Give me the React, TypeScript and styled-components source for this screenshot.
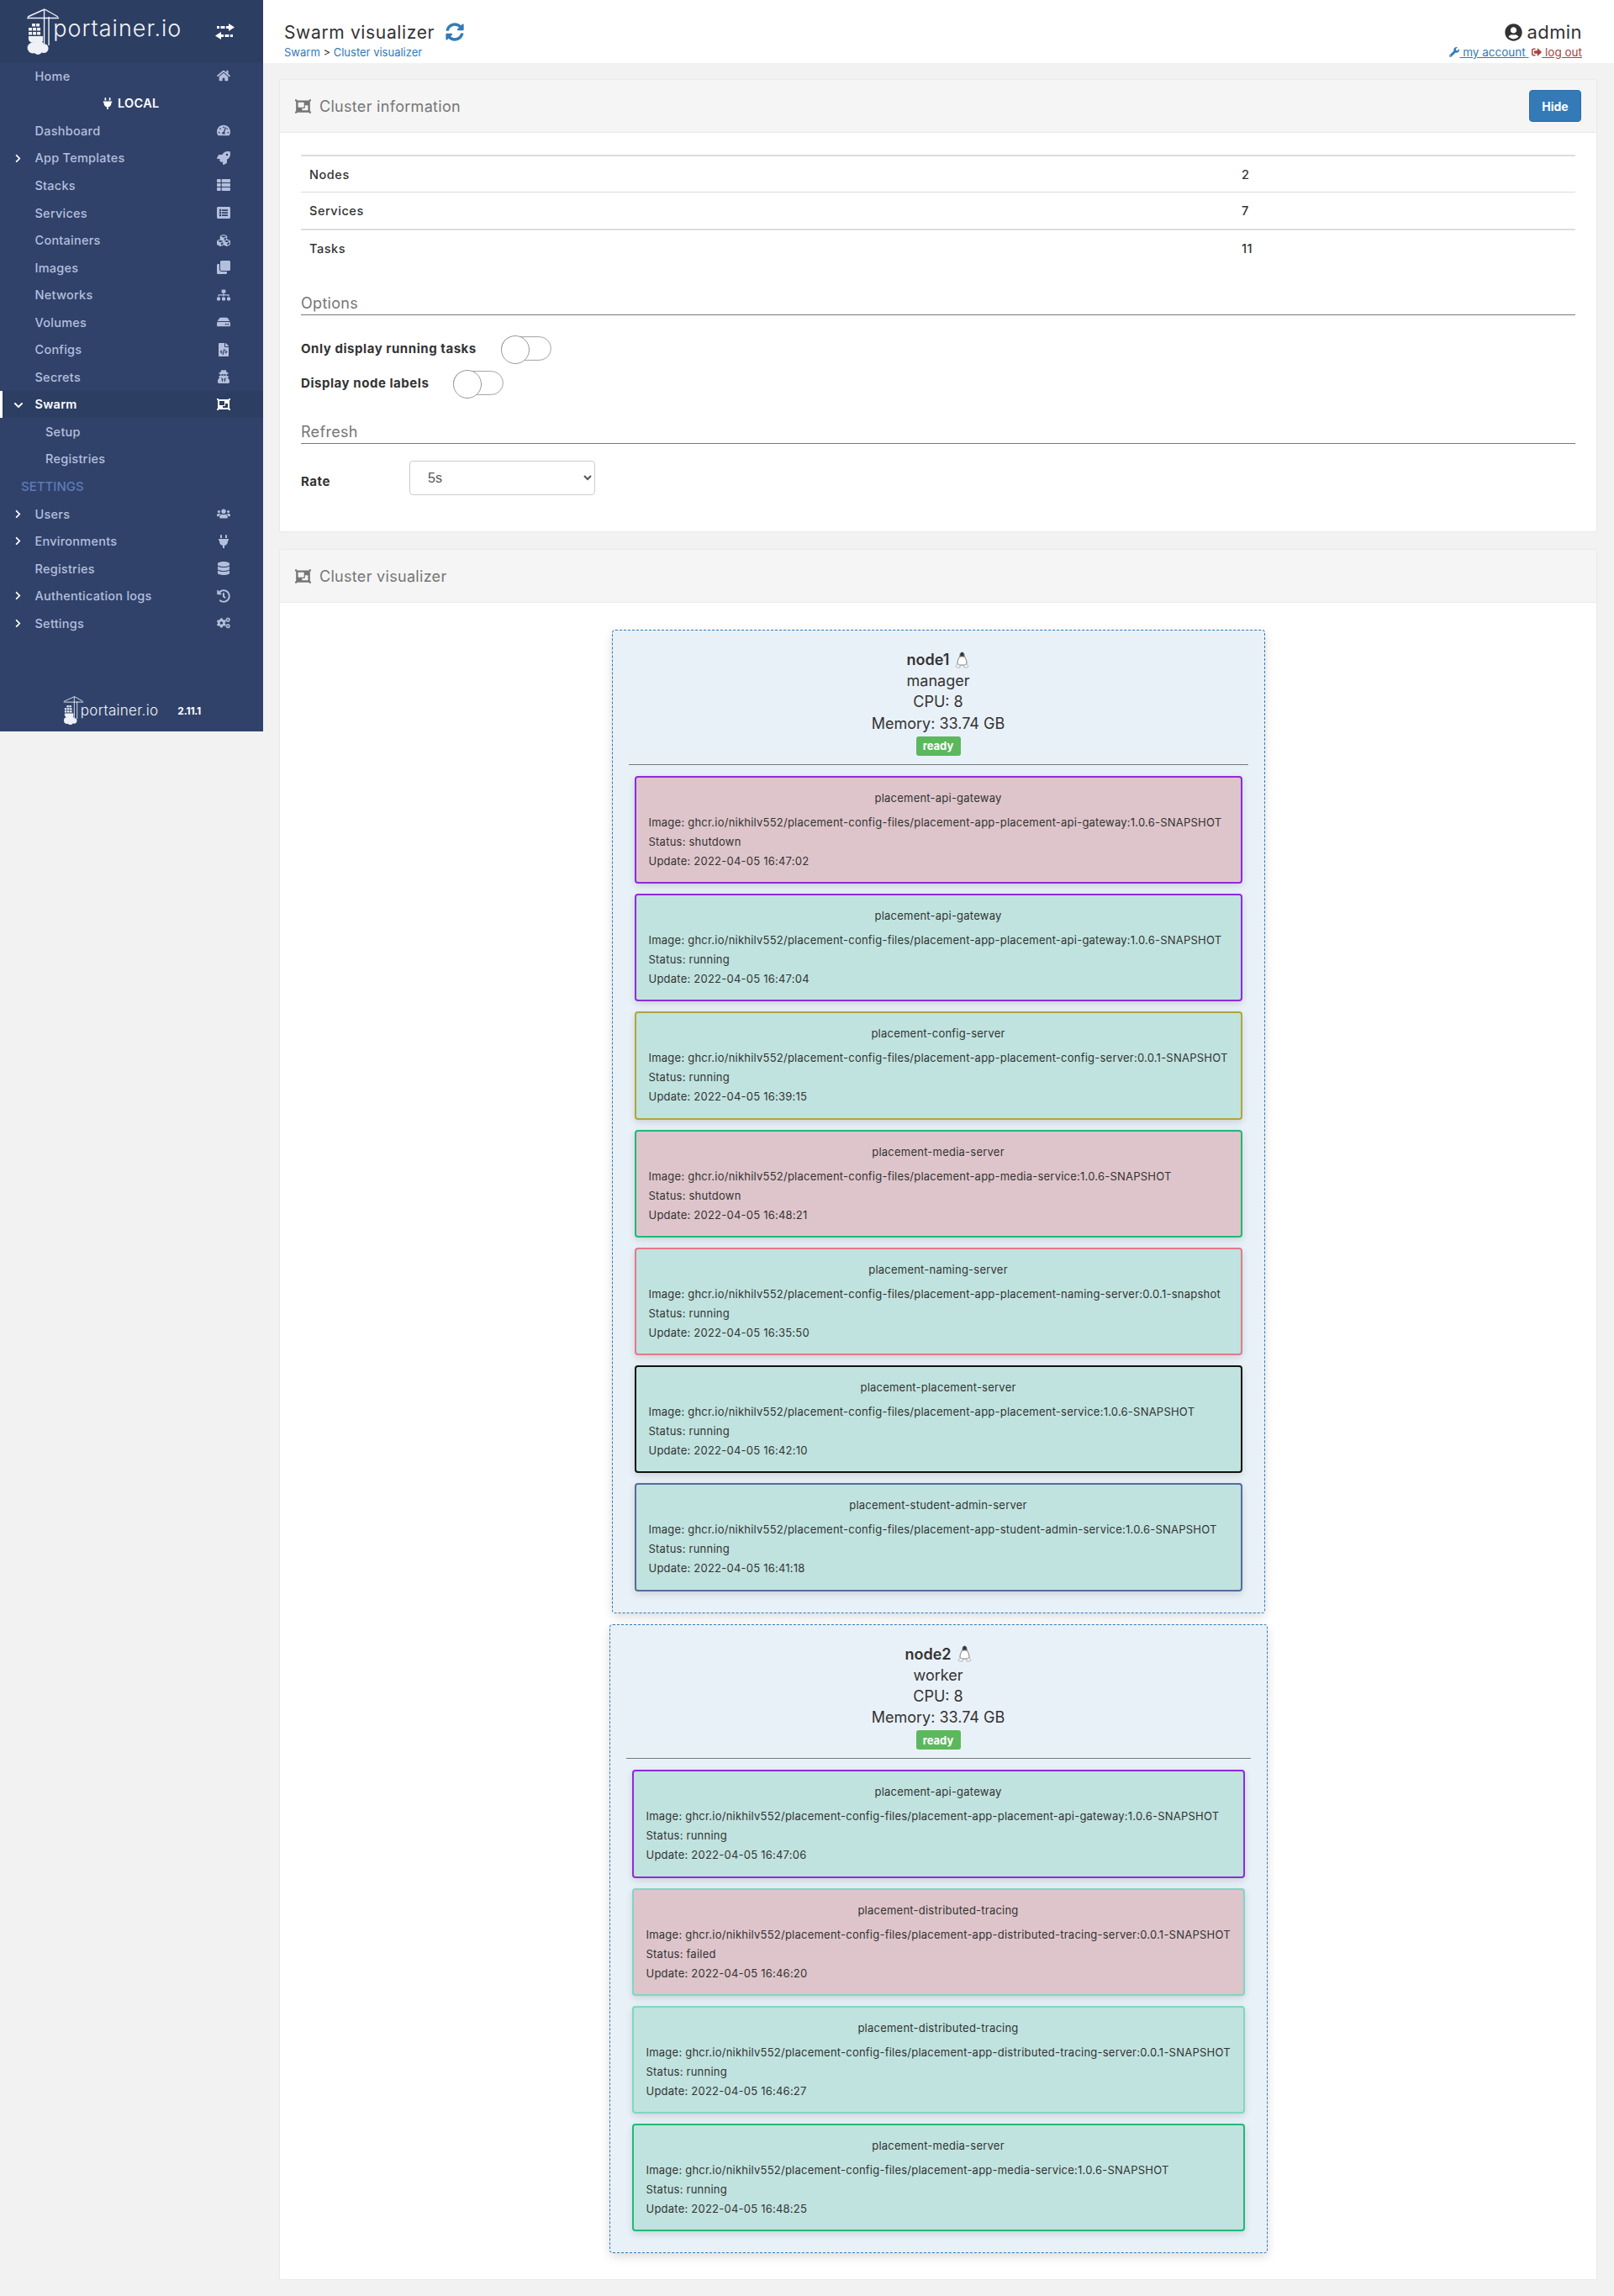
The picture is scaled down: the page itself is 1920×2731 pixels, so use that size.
import React from 'react';
import styled, { createGlobalStyle } from 'styled-components';
import {
  FaHome,
  FaTachometerAlt,
  FaRocket,
  FaThList,
  FaListAlt,
  FaCubes,
  FaClone,
  FaSitemap,
  FaHdd,
  FaFileCode,
  FaUserSecret,
  FaObjectGroup,
  FaUsers,
  FaPlug,
  FaDatabase,
  FaHistory,
  FaCogs,
  FaSyncAlt,
  FaUserCircle,
  FaWrench,
  FaSignOutAlt,
  FaChevronRight,
  FaChevronDown,
} from 'react-icons/fa';

const GlobalStyle = createGlobalStyle`
  html, body {
    margin: 0;
    padding: 0;
    background: #f2f2f2;
    color: #333;
    font-family: Inter, "Open Sans", sans-serif;
  }
  * {
    box-sizing: border-box;
  }
`;

const Page = styled.div`
  display: flex;
  width: 1920px;
  height: 2731px;
  overflow: hidden;
`;

/* sidebar */

const Sidebar = styled.aside`
  width: 313px;
  height: 870px;
  flex: none;
  background: #30426a;
  display: flex;
  flex-direction: column;
`;

const Brand = styled.div`
  height: 75px;
  flex: none;
  margin-bottom: -1px;
  background: #2d3e63;
  display: flex;
  align-items: center;
  padding-left: 31px;
  color: #fff;
`;

const BrandText = styled.span<{ $small?: boolean }>`
  font-weight: 300;
  color: #f2f4f8;
  font-size: ${p => (p.$small ? '17px' : '27px')};
  letter-spacing: ${p => (p.$small ? '0.3px' : '1px')};
  margin-left: ${p => (p.$small ? '-4px' : '-8px')};
  margin-top: ${p => (p.$small ? '0' : '-9px')};
`;

const SwitchEnv = styled.svg`
  margin-left: 40px;
  flex: none;
`;

const NavRow = styled.div<{ $active?: boolean; $child?: boolean }>`
  height: 32.56px;
  flex: none;
  position: relative;
  display: flex;
  align-items: center;
  padding-left: ${p => (p.$child ? '54px' : '41.5px')};
  font-size: 14.5px;
  letter-spacing: 0.25px;
  font-weight: ${p => (p.$active ? 600 : 500)};
  color: ${p => (p.$active ? '#fff' : '#b4bfdd')};
  background: ${p => (p.$active ? '#2d3e63' : 'transparent')};
  border-left: ${p => (p.$active ? '3px solid #fff' : 'none')};
  text-indent: ${p => (p.$active ? '-3px' : '0')};
`;

const Chevron = styled.span<{ $active?: boolean }>`
  position: absolute;
  left: ${p => (p.$active ? '13px' : '16px')};
  top: 11px;
  display: flex;
  font-size: ${p => (p.$active ? '12px' : '11px')};
  color: #fff;
`;

const NavIcon = styled.span<{ $active?: boolean }>`
  position: absolute;
  left: ${p => (p.$active ? '253px' : '256px')};
  top: 0;
  bottom: 0;
  width: 20px;
  display: flex;
  align-items: center;
  justify-content: center;
  font-size: 16px;
  color: ${p => (p.$active ? '#fff' : '#b4bfdd')};
`;

const EndpointTitle = styled.div`
  height: 32.56px;
  flex: none;
  padding-left: 121px;
  display: flex;
  align-items: center;
  gap: 5px;
  color: #fff;
  font-size: 14.5px;
  letter-spacing: 0.3px;
  font-weight: 600;
`;

const SectionLabel = styled.div`
  height: 32.56px;
  flex: none;
  padding-left: 25px;
  display: flex;
  align-items: center;
  color: #5f7ab8;
  font-size: 15px;
  font-weight: 500;
`;

const SidebarFooter = styled.div`
  margin-top: auto;
  height: 50px;
  padding: 0 0 0 75px;
  display: flex;
  align-items: center;
`;

const Version = styled.span`
  margin-left: 23px;
  color: #fff;
  font-size: 12px;
  font-weight: 700;
  letter-spacing: -0.2px;
`;

const LogoMark: React.FC<{ size: number }> = ({ size }) => (
  <svg width={size * 0.73} height={size} viewBox='0 0 40 55' style={{ flex: 'none' }}>
    <g stroke='#eef1f6' fill='none' strokeWidth='1.4'>
      <path d='M1 11.5 H39 M22 1 L2 10 M22 1 L38 10' />
      <path d='M21.5 1 V42 M27 10 V44' />
    </g>
    <g fill='#eef1f6'>
      <rect x='7' y='18' width='4' height='3.5' />
      <rect x='12' y='18' width='4' height='3.5' />
      <rect x='3' y='23' width='4' height='3.5' />
      <rect x='8' y='23' width='4' height='3.5' />
      <rect x='13' y='23' width='4' height='3.5' />
      <rect x='3' y='28' width='4' height='3.5' />
      <rect x='8' y='28' width='4' height='3.5' />
      <rect x='13' y='28' width='4' height='3.5' />
      <path d='M3 33 H20 V39 Q17 41 13 40 Q9 42 5 40 Q2 38 3 33 Z' />
      <circle cx='8' cy='47' r='6.5' />
      <circle cx='15' cy='44' r='6' />
      <circle cx='21' cy='47.5' r='5.5' />
      <circle cx='14' cy='50' r='5' />
    </g>
  </svg>
);

const SwitchEnvIcon: React.FC = () => (
  <SwitchEnv width='23' height='21' viewBox='0 0 23 21'>
    <g fill='#fff'>
      <path d='M16 1 L23 5.5 L16 10 V7 H13 V4 H16 Z' />
      <rect x='2' y='4' width='3' height='3' />
      <rect x='6.5' y='4' width='5' height='3' />
      <path d='M7 11 L0 15.5 L7 20 V17 H10 V14 H7 Z' />
      <rect x='11.5' y='14' width='5' height='3' />
      <rect x='18' y='14' width='3' height='3' />
    </g>
  </SwitchEnv>
);

type NavItem = {
  label: string;
  icon?: React.ReactNode;
  expandable?: boolean;
  active?: boolean;
  child?: boolean;
};

const upperNav: NavItem[] = [
  { label: 'Dashboard', icon: <FaTachometerAlt /> },
  { label: 'App Templates', icon: <FaRocket />, expandable: true },
  { label: 'Stacks', icon: <FaThList /> },
  { label: 'Services', icon: <FaListAlt /> },
  { label: 'Containers', icon: <FaCubes /> },
  { label: 'Images', icon: <FaClone /> },
  { label: 'Networks', icon: <FaSitemap /> },
  { label: 'Volumes', icon: <FaHdd /> },
  { label: 'Configs', icon: <FaFileCode /> },
  { label: 'Secrets', icon: <FaUserSecret /> },
  { label: 'Swarm', icon: <FaObjectGroup />, active: true, expandable: true },
  { label: 'Setup', child: true },
  { label: 'Registries', child: true },
];

const settingsNav: NavItem[] = [
  { label: 'Users', icon: <FaUsers />, expandable: true },
  { label: 'Environments', icon: <FaPlug />, expandable: true },
  { label: 'Registries', icon: <FaDatabase /> },
  { label: 'Authentication logs', icon: <FaHistory />, expandable: true },
  { label: 'Settings', icon: <FaCogs />, expandable: true },
];

const NavLine: React.FC<{ item: NavItem }> = ({ item }) => (
  <NavRow $active={item.active} $child={item.child}>
    {item.expandable && (
      <Chevron $active={item.active}>{item.active ? <FaChevronDown /> : <FaChevronRight />}</Chevron>
    )}
    {item.label}
    {item.icon && <NavIcon $active={item.active}>{item.icon}</NavIcon>}
  </NavRow>
);

/* top bar */

const Main = styled.main`
  flex: 1;
  min-width: 0;
  display: flex;
  flex-direction: column;
`;

const TopBar = styled.header`
  height: 75px;
  flex: none;
  background: #fff;
  display: flex;
  justify-content: space-between;
  padding: 26px 38px 0 25px;
`;

const TitleLine = styled.div`
  display: flex;
  align-items: center;
  gap: 13px;
  height: 24px;
  font-size: 21px;
  letter-spacing: 0.65px;
  font-weight: 400;
  color: #333;
`;

const RefreshIcon = styled.span`
  display: flex;
  color: #337ab7;
  font-size: 22px;
`;

const Crumbs = styled.div`
  margin-top: 4px;
  font-size: 13px;
  color: #337ab7;
  span {
    color: #333;
  }
`;

const UserBlock = styled.div`
  display: flex;
  flex-direction: column;
  align-items: flex-end;
`;

const UserName = styled.div`
  display: flex;
  align-items: center;
  gap: 6px;
  height: 24px;
  font-size: 22px;
  letter-spacing: 0.4px;
  color: #333;
`;

const UserLinks = styled.div`
  margin-top: 4px;
  font-size: 13.5px;
  white-space: pre;
`;

const UserLink = styled.a<{ $danger?: boolean }>`
  color: ${p => (p.$danger ? '#a94442' : '#337ab7')};
  text-decoration: underline;
  svg {
    font-size: 12px;
    vertical-align: -1px;
  }
`;

/* panels */

const Content = styled.div`
  padding: 19px 20px 19px 19px;
  display: flex;
  flex-direction: column;
  gap: 20px;
  flex: 1;
`;

const Panel = styled.section<{ $height?: number }>`
  background: #fff;
  border: 1px solid #e9e9e9;
  border-radius: 2px;
  flex: ${p => (p.$height ? 'none' : '1')};
  height: ${p => (p.$height ? `${p.$height}px` : 'auto')};
`;

const PanelHead = styled.div`
  height: 63px;
  background: #f5f5f5;
  border-bottom: 1px solid #e9e9e9;
  display: flex;
  align-items: center;
  justify-content: space-between;
  padding: 0 18px 0 18px;
`;

const PanelTitle = styled.div`
  display: flex;
  align-items: center;
  gap: 10px;
  font-size: 18px;
  letter-spacing: 0.3px;
  color: #767676;
  svg {
    font-size: 19px;
  }
`;

const HideButton = styled.button`
  width: 62px;
  height: 38px;
  background: #337ab7;
  border: 1px solid #2e6da4;
  border-radius: 4px;
  color: #fff;
  font: 700 14px Inter, sans-serif;
  padding: 0;
`;

const PanelBody = styled.div`
  padding: 26px 25px 0 25px;
`;

const InfoTable = styled.div`
  display: flex;
  flex-direction: column;
  margin-bottom: 34px;
`;

const InfoRow = styled.div<{ $thick?: boolean }>`
  height: 44px;
  border-top: ${p => (p.$thick ? '2px' : '1px')} solid #ddd;
  display: flex;
  align-items: center;
  padding-left: 10px;
  font-size: 14.5px;
  letter-spacing: 0.55px;
  font-weight: 500;
`;

const InfoLabel = styled.span`
  width: 1109px;
`;

const FormSection = styled.div<{ $gap: number }>`
  height: 25px;
  margin-top: ${p => p.$gap}px;
  border-bottom: 1px solid #777;
  font-size: 18px;
  letter-spacing: 0.3px;
  line-height: 22px;
  color: #767676;
`;

const OptionRow = styled.div<{ $first?: boolean }>`
  height: 41px;
  margin-top: ${p => (p.$first ? '19px' : '0')};
  display: flex;
  align-items: center;
  gap: 29px;
`;

const OptionLabel = styled.span`
  font-size: 15px;
  font-weight: 700;
  letter-spacing: 0.55px;
  color: #333;
`;

const Switch = styled.span`
  position: relative;
  width: 60px;
  height: 29px;
  border: 1px solid #aaa;
  border-radius: 15px;
  background: #fff;
  box-shadow: inset 0 0 2px rgba(0, 0, 0, 0.15);
  &::before {
    content: '';
    position: absolute;
    left: -1px;
    top: -2px;
    width: 32px;
    height: 32px;
    border: 1px solid #999;
    border-radius: 50%;
    background: #fff;
  }
`;

const RateRow = styled.div`
  margin-top: 20px;
  display: flex;
  align-items: center;
  height: 41px;
`;

const RateLabel = styled(OptionLabel)`
  width: 129px;
  margin-top: 8px;
`;

const RateSelect = styled.select`
  width: 221px;
  height: 41px;
  border: 1px solid #ccc;
  border-radius: 4px;
  background: #fff;
  color: #555;
  font: 16px "Liberation Sans", Arial, sans-serif;
  padding: 0 0 0 17px;
`;

/* cluster */

const Cluster = styled.div`
  padding-top: 32px;
  display: flex;
  flex-direction: column;
  align-items: center;
  gap: 13px;
`;

const NodeBox = styled.div<{ $width: number }>`
  width: ${p => p.$width}px;
  background: #e9f1f8;
  border: 1px dashed #337ab7;
  border-radius: 4px;
  box-shadow: 0 4px 12px rgba(0, 0, 0, 0.14);
  padding: 22px 19px 25px;
  display: flex;
  flex-direction: column;
  align-items: center;
`;

const NodeLine = styled.div<{ $strong?: boolean }>`
  height: 25.2px;
  line-height: 25.2px;
  font-size: 18px;
  font-weight: ${p => (p.$strong ? 600 : 400)};
  color: #333;
  display: flex;
  align-items: center;
  gap: 7px;
`;

const Badge = styled.span`
  margin-top: 3px;
  width: 53px;
  height: 23px;
  background: #5cb85c;
  border-radius: 3px;
  color: #fff;
  font-size: 13px;
  font-weight: 700;
  display: flex;
  align-items: center;
  justify-content: center;
`;

const NodeRule = styled.hr`
  width: 100%;
  height: 1px;
  border: 0;
  background: #777;
  margin: 10px 0 13px;
`;

const TaskList = styled.div`
  width: 100%;
  padding: 0 7px;
  display: flex;
  flex-direction: column;
  gap: 12px;
`;

const TaskCard = styled.div<{ $color: string; $failed: boolean }>`
  height: 128.25px;
  border: 2px solid ${p => p.$color};
  border-radius: 4px;
  background: ${p => (p.$failed ? '#dec5cb' : '#c0e3df')};
  box-shadow: 0 3px 8px rgba(0, 0, 0, 0.13);
  padding: 16px 15px 0;
  font-size: 13px;
  letter-spacing: 0.23px;
  color: #333;
  white-space: nowrap;
`;

const TaskName = styled.div`
  text-align: center;
  height: 17px;
  line-height: 17px;
  margin-bottom: 12px;
`;

const TaskLine = styled.div`
  height: 23px;
  line-height: 17px;
`;

const Penguin: React.FC = () => (
  <svg width='17' height='20' viewBox='0 0 17 20' style={{ flex: 'none' }}>
    <path
      d='M8.5 1 C6.6 1 6 2.6 6 4.5 C6 6.5 3 9.5 3 13 C3 14.5 3.4 15.5 4 16 L12.8 16 C13.6 15.4 14 14.5 14 13 C14 9.5 11 6.5 11 4.5 C11 2.6 10.4 1 8.5 1 Z'
      fill='#fff'
      stroke='#555a60'
      strokeWidth='0.8'
    />
    <path d='M8.5 1 C6.8 1 6.2 2.6 6.2 4.5 L6.6 7 C7.6 5.5 9.4 5.5 10.4 7 L10.8 4.5 C10.8 2.6 10.2 1 8.5 1 Z' fill='#33383e' />
    <path d='M7.4 5.4 L9.6 5.4 L8.5 6.6 Z' fill='#d9a441' />
    <path
      d='M4.2 15 C2.6 15.4 1.4 16.5 0.8 17.6 C2.4 18.8 4.6 19.6 6 19 C6.6 17.6 5.6 15.6 4.2 15 Z M12.8 15 C14.4 15.4 15.6 16.5 16.2 17.6 C14.6 18.8 12.4 19.6 11 19 C10.4 17.6 11.4 15.6 12.8 15 Z'
      fill='#f4f5f7'
      stroke='#8a8f96'
      strokeWidth='0.6'
    />
  </svg>
);

const api = 'ghcr.io/nikhilv552/placement-config-files/placement-app-';

type Task = {
  name: string;
  image: string;
  status: string;
  update: string;
  color: string;
};

type SwarmNode = {
  name: string;
  role: string;
  width: number;
  tasks: Task[];
};

const nodes: SwarmNode[] = [
  {
    name: 'node1',
    role: 'manager',
    width: 777,
    tasks: [
      { name: 'placement-api-gateway', image: 'placement-api-gateway:1.0.6-SNAPSHOT', status: 'shutdown', update: '2022-04-05 16:47:02', color: '#8f2bdc' },
      { name: 'placement-api-gateway', image: 'placement-api-gateway:1.0.6-SNAPSHOT', status: 'running', update: '2022-04-05 16:47:04', color: '#8f2bdc' },
      { name: 'placement-config-server', image: 'placement-config-server:0.0.1-SNAPSHOT', status: 'running', update: '2022-04-05 16:39:15', color: '#b0a53c' },
      { name: 'placement-media-server', image: 'media-service:1.0.6-SNAPSHOT', status: 'shutdown', update: '2022-04-05 16:48:21', color: '#1fb978' },
      { name: 'placement-naming-server', image: 'placement-naming-server:0.0.1-snapshot', status: 'running', update: '2022-04-05 16:35:50', color: '#e07a8b' },
      { name: 'placement-placement-server', image: 'placement-service:1.0.6-SNAPSHOT', status: 'running', update: '2022-04-05 16:42:10', color: '#12140a' },
      { name: 'placement-student-admin-server', image: 'student-admin-service:1.0.6-SNAPSHOT', status: 'running', update: '2022-04-05 16:41:18', color: '#566c99' },
    ],
  },
  {
    name: 'node2',
    role: 'worker',
    width: 783,
    tasks: [
      { name: 'placement-api-gateway', image: 'placement-api-gateway:1.0.6-SNAPSHOT', status: 'running', update: '2022-04-05 16:47:06', color: '#8f2bdc' },
      { name: 'placement-distributed-tracing', image: 'distributed-tracing-server:0.0.1-SNAPSHOT', status: 'failed', update: '2022-04-05 16:46:20', color: '#7fd7c4' },
      { name: 'placement-distributed-tracing', image: 'distributed-tracing-server:0.0.1-SNAPSHOT', status: 'running', update: '2022-04-05 16:46:27', color: '#7fd7c4' },
      { name: 'placement-media-server', image: 'media-service:1.0.6-SNAPSHOT', status: 'running', update: '2022-04-05 16:48:25', color: '#1fb978' },
    ],
  },
];

const App: React.FC = () => (
  <Page>
    <GlobalStyle />
    <Sidebar>
      <Brand>
        <LogoMark size={55} />
        <BrandText>portainer.io</BrandText>
        <SwitchEnvIcon />
      </Brand>
      <NavLine item={{ label: 'Home', icon: <FaHome /> }} />
      <EndpointTitle>
        <FaPlug size={14} /> LOCAL
      </EndpointTitle>
      {upperNav.map(item => (
        <NavLine key={item.label} item={item} />
      ))}
      <SectionLabel>SETTINGS</SectionLabel>
      {settingsNav.map(item => (
        <NavLine key={item.label} item={item} />
      ))}
      <SidebarFooter>
        <LogoMark size={34} />
        <BrandText $small>portainer.io</BrandText>
        <Version>2.11.1</Version>
      </SidebarFooter>
    </Sidebar>
    <Main>
      <TopBar>
        <div>
          <TitleLine>
            Swarm visualizer
            <RefreshIcon>
              <FaSyncAlt />
            </RefreshIcon>
          </TitleLine>
          <Crumbs>
            Swarm <span>&gt;</span> Cluster visualizer
          </Crumbs>
        </div>
        <UserBlock>
          <UserName>
            <FaUserCircle size={21} /> admin
          </UserName>
          <UserLinks>
            <UserLink>
              <FaWrench /> my account{' '}
            </UserLink>
            {' '}
            <UserLink $danger>
              <FaSignOutAlt /> log out
            </UserLink>
          </UserLinks>
        </UserBlock>
      </TopBar>
      <Content>
        <Panel $height={539}>
          <PanelHead>
            <PanelTitle>
              <FaObjectGroup /> Cluster information
            </PanelTitle>
            <HideButton>Hide</HideButton>
          </PanelHead>
          <PanelBody>
            <InfoTable>
              <InfoRow $thick>
                <InfoLabel>Nodes</InfoLabel>2
              </InfoRow>
              <InfoRow>
                <InfoLabel>Services</InfoLabel>7
              </InfoRow>
              <InfoRow $thick>
                <InfoLabel>Tasks</InfoLabel>11
              </InfoRow>
            </InfoTable>
            <FormSection $gap={10}>Options</FormSection>
            <OptionRow $first>
              <OptionLabel>Only display running tasks</OptionLabel>
              <Switch />
            </OptionRow>
            <OptionRow>
              <OptionLabel>Display node labels</OptionLabel>
              <Switch />
            </OptionRow>
            <FormSection $gap={27}>Refresh</FormSection>
            <RateRow>
              <RateLabel>Rate</RateLabel>
              <RateSelect defaultValue='5s'>
                <option>5s</option>
                <option>10s</option>
                <option>30s</option>
              </RateSelect>
            </RateRow>
          </PanelBody>
        </Panel>
        <Panel>
          <PanelHead>
            <PanelTitle>
              <FaObjectGroup /> Cluster visualizer
            </PanelTitle>
          </PanelHead>
          <Cluster>
            {nodes.map(node => (
              <NodeBox key={node.name} $width={node.width}>
                <NodeLine $strong>
                  {node.name} <Penguin />
                </NodeLine>
                <NodeLine>{node.role}</NodeLine>
                <NodeLine>CPU: 8</NodeLine>
                <NodeLine>Memory: 33.74 GB</NodeLine>
                <Badge>ready</Badge>
                <NodeRule />
                <TaskList>
                  {node.tasks.map(task => (
                    <TaskCard
                      key={task.update}
                      $color={task.color}
                      $failed={task.status !== 'running'}
                    >
                      <TaskName>{task.name}</TaskName>
                      <TaskLine>Image: {api + task.image}</TaskLine>
                      <TaskLine>Status: {task.status}</TaskLine>
                      <TaskLine>Update: {task.update}</TaskLine>
                    </TaskCard>
                  ))}
                </TaskList>
              </NodeBox>
            ))}
          </Cluster>
        </Panel>
      </Content>
    </Main>
  </Page>
);

export default App;
